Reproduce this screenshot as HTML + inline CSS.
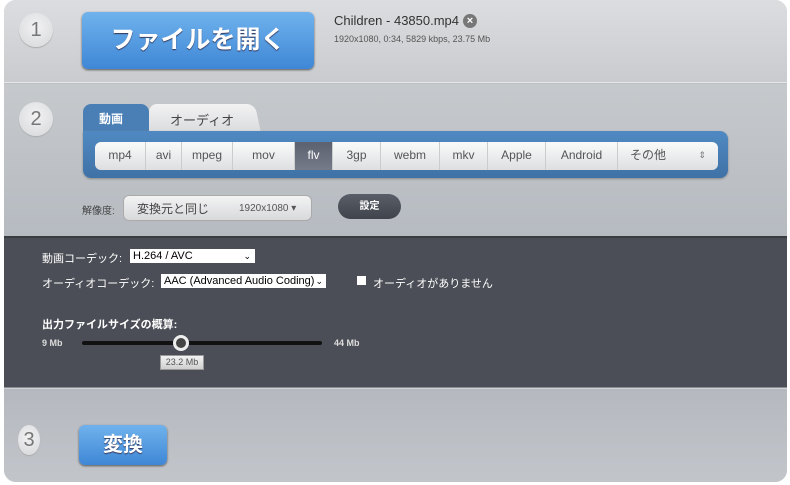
<!DOCTYPE html>
<html><head><meta charset="utf-8"><style>
*{margin:0;padding:0;box-sizing:border-box}
body{width:790px;height:485px;background:#fff;font-family:"Liberation Sans","Noto Sans CJK JP",sans-serif;position:relative;overflow:hidden}
.wrap{position:absolute;left:4px;top:0;width:783px;height:482px;border-radius:12px;overflow:hidden;background:#bcc0c5}
.s1{position:absolute;left:0;top:0;width:100%;height:83px;background:linear-gradient(#dcdde0,#c9cbce);border-bottom:1px solid #e6e7e9}
.s2{position:absolute;left:0;top:84px;width:100%;height:152px;background:linear-gradient(#c6c9cc,#b6bbc1)}
.dk{position:absolute;left:0;top:236px;width:100%;height:152px;background:#4b4e56;border-top:2px solid #3a3c42;border-bottom:1px solid #8a8d93}
.s3{position:absolute;left:0;top:388px;width:100%;height:94px;background:linear-gradient(#b5b9bf,#c2c5ca);border-top:1px solid #d0d3d6}
.num{position:absolute;width:34px;height:34px;border-radius:50%;background:radial-gradient(circle at 50% 40%,#f2f2f3,#d6d7da);box-shadow:0 1px 1px #aaa;color:#777;font-size:20px;text-align:center;line-height:34px}
.blue{position:absolute;background:linear-gradient(#6fb2ec,#3f87d6);border-radius:6px;color:#fff;font-weight:bold;text-align:center;box-shadow:0 1px 2px #555;text-shadow:0 1px 1px #335}
.t{position:absolute;white-space:nowrap}
.seg{position:absolute;top:142px;height:28px;border-right:1px solid #ccc;background:linear-gradient(#fafafa,#dedfe1);color:#555;font-size:12px;text-align:center;line-height:27px}
</style></head><body>
<div class="wrap">
<div class="s1"></div><div class="s2"></div><div class="dk"></div><div class="s3"></div>
<div class="num" style="left:15px;top:13px">1</div>
<div class="blue" style="left:78px;top:12px;width:232px;height:57px;font-size:25px;line-height:57px">ファイルを開く</div>
<div class="t" style="left:330px;top:13px;font-size:13px;color:#333">Children - 43850.mp4</div>
<div style="position:absolute;left:459px;top:14px;width:14px;height:14px;border-radius:50%;background:#777;color:#fff;font-size:11px;line-height:14px;text-align:center;font-weight:bold">×</div>
<div class="t" style="left:330px;top:34px;font-size:9px;color:#555">1920x1080, 0:34, 5829 kbps, 23.75 Mb</div>

<div class="num" style="left:15px;top:102px">2</div>
<div style="position:absolute;left:145px;top:104px;width:102px;height:30px;border-radius:8px 8px 0 0;background:linear-gradient(#f2f2f3,#d9dadc)"></div>
<div style="position:absolute;left:240px;top:104px;width:14px;height:30px;border-radius:0 8px 0 0;background:linear-gradient(#f2f2f3,#d9dadc);transform:skewX(12deg)"></div>
<div class="t" style="left:166px;top:110px;font-size:13px;color:#444">オーディオ</div>
<div style="position:absolute;left:79px;top:104px;width:66px;height:32px;border-radius:8px 8px 0 0;background:#4a7fb5"></div>
<div class="t" style="left:95px;top:110px;font-size:12px;color:#fff;font-weight:bold">動画</div>
<div style="position:absolute;left:79px;top:131px;width:645px;height:47px;border-radius:0 8px 8px 8px;background:linear-gradient(#5089c2,#3f72a6);box-shadow:0 1px 2px #888"></div>
<div class="seg" style="left:91px;width:51px;border-radius:6px 0 0 6px">mp4</div>
<div class="seg" style="left:142px;width:36px">avi</div>
<div class="seg" style="left:178px;width:51px">mpeg</div>
<div class="seg" style="left:229px;width:62px">mov</div>
<div class="seg" style="left:291px;width:38px;background:linear-gradient(#5c6170,#757b88);color:#fff">flv</div>
<div class="seg" style="left:329px;width:48px">3gp</div>
<div class="seg" style="left:377px;width:59px">webm</div>
<div class="seg" style="left:436px;width:48px">mkv</div>
<div class="seg" style="left:484px;width:58px">Apple</div>
<div class="seg" style="left:542px;width:72px">Android</div>
<div class="seg" style="left:614px;width:100px;border-radius:0 6px 6px 0;border-right:0;text-align:left;padding-left:12px">その他<span style="position:absolute;right:12px;font-size:9px;color:#777">⇕</span></div>

<div class="t" style="left:78px;top:202px;font-size:10px;color:#444">解像度:</div>
<div style="position:absolute;left:119px;top:195px;width:189px;height:26px;border-radius:6px;background:linear-gradient(#f3f3f4,#d8d9db);border:1px solid #aaa"></div>
<div class="t" style="left:133px;top:200px;font-size:12px;color:#444">変換元と同じ</div>
<div class="t" style="left:235px;top:203px;font-size:10px;color:#555">1920x1080 ▾</div>
<div style="position:absolute;left:334px;top:194px;width:63px;height:25px;border-radius:13px;background:linear-gradient(#5a5e68,#3f434b);color:#fff;font-size:10px;font-weight:bold;text-align:center;line-height:25px">設定</div>

<div class="t" style="left:38px;top:250px;font-size:11px;color:#fff">動画コーデック:</div>
<div style="position:absolute;left:126px;top:249px;width:125px;height:14px;background:#fff;font-size:11px;line-height:14px;padding-left:3px;color:#000">H.264 / AVC<span style="position:absolute;right:4px;font-size:9px">⌄</span></div>
<div class="t" style="left:38px;top:275px;font-size:11px;color:#fff">オーディオコーデック:</div>
<div style="position:absolute;left:157px;top:274px;width:165px;height:14px;background:#fff;font-size:11px;line-height:14px;padding-left:3px;color:#000">AAC (Advanced Audio Coding)<span style="position:absolute;right:3px;font-size:9px">⌄</span></div>
<div style="position:absolute;left:353px;top:276px;width:9px;height:9px;background:#fff"></div>
<div class="t" style="left:369px;top:275px;font-size:11px;color:#fff">オーディオがありません</div>
<div class="t" style="left:38px;top:316px;font-size:11px;color:#fff;font-weight:bold">出力ファイルサイズの概算:</div>
<div class="t" style="left:38px;top:338px;font-size:9px;color:#ddd;font-weight:bold">9 Mb</div>
<div style="position:absolute;left:78px;top:341px;width:240px;height:4px;border-radius:2px;background:#111"></div>
<div style="position:absolute;left:169px;top:335px;width:16px;height:16px;border-radius:50%;background:#eee"></div>
<div style="position:absolute;left:172px;top:338px;width:10px;height:10px;border-radius:50%;background:#444"></div>
<div class="t" style="left:330px;top:338px;font-size:9px;color:#ddd;font-weight:bold">44 Mb</div>
<div style="position:absolute;left:156px;top:355px;width:44px;height:15px;background:linear-gradient(#f3f3f3,#cfcfcf);border:1px solid #999;font-size:9px;color:#555;text-align:center;line-height:13px">23.2 Mb</div>

<div class="num" style="left:14px;top:425px;width:22px;height:30px;border-radius:50%;line-height:30px">3</div>
<div class="blue" style="left:75px;top:425px;width:88px;height:40px;font-size:20px;line-height:40px">変換</div>
</div>
</body></html>
